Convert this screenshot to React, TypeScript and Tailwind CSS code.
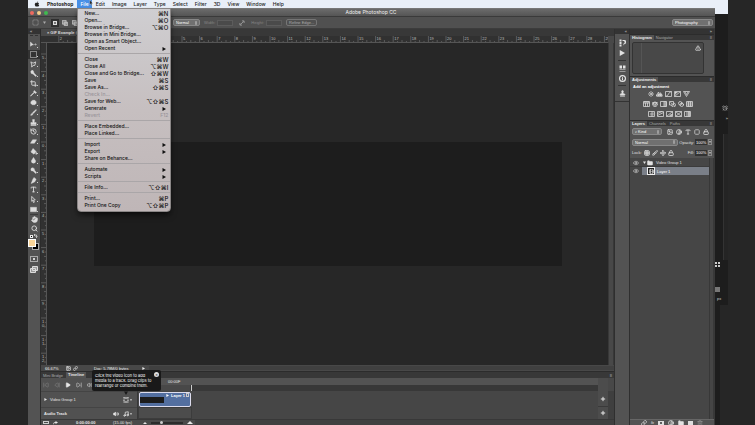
import React from 'react';
import {
  AlarmClock, Blend, Brush, Contrast, Crop, Droplet, Eraser, Eye, Film, Folder, Grid3x3,
  Hand, History, Image, Info, Link, Lock, Move, Music, PaintBucket, PenTool, Pipette, Play,
  Plus, Scale, Scissors, Search, SkipBack, SkipForward, SquareDashed, Stamp, StepBack, Sun, Trash2,
  TriangleAlert, Type, Volume2, Wand2,
} from 'lucide-react';
import { FaApple } from 'react-icons/fa';
import { clsx } from 'clsx';

type Item = { label: string; keys?: string; sub?: boolean; off?: boolean };

const menus = ['Edit', 'Image', 'Layer', 'Type', 'Select', 'Filter', '3D', 'View', 'Window', 'Help'];

const fileMenu: Item[][] = [
  [
    { label: 'New...', keys: '⌘N' },
    { label: 'Open...', keys: '⌘O' },
    { label: 'Browse in Bridge...', keys: '⌥⌘O' },
    { label: 'Browse in Mini Bridge...' },
    { label: 'Open as Smart Object...' },
    { label: 'Open Recent', sub: true },
  ],
  [
    { label: 'Close', keys: '⌘W' },
    { label: 'Close All', keys: '⌥⌘W' },
    { label: 'Close and Go to Bridge...', keys: '⇧⌘W' },
    { label: 'Save', keys: '⌘S' },
    { label: 'Save As...', keys: '⇧⌘S' },
    { label: 'Check In...', off: true },
    { label: 'Save for Web...', keys: '⌥⇧⌘S' },
    { label: 'Generate', sub: true },
    { label: 'Revert', keys: 'F12', off: true },
  ],
  [{ label: 'Place Embedded...' }, { label: 'Place Linked...' }],
  [
    { label: 'Import', sub: true },
    { label: 'Export', sub: true },
    { label: 'Share on Behance...' },
  ],
  [
    { label: 'Automate', sub: true },
    { label: 'Scripts', sub: true },
  ],
  [{ label: 'File Info...', keys: '⌥⇧⌘I' }],
  [
    { label: 'Print...', keys: '⌘P' },
    { label: 'Print One Copy', keys: '⌥⇧⌘P' },
  ],
];

function FileMenu() {
  return (
    <div className="absolute left-0 top-full z-30 w-[94px] rounded-b-sm border border-[#8a8686] bg-linear-to-b from-[#cfced1] via-[#c6bfc0] to-[#bfb6b7] pb-0.5 pt-px text-[#111] shadow-md shadow-black/50">
      {fileMenu.map((group, i) => (
        <div key={i} className={clsx(i > 0 && 'mt-px border-t border-[#aaa6a8] pt-0.5')}>
          {group.map((item) => (
            <button
              key={item.label}
              disabled={item.off}
              className={clsx('flex h-[7px] w-full items-center justify-between pl-1.5 pr-0.5 font-medium', item.off && 'text-[#99949a]')}
            >
              <span>{item.label}</span>
              {item.keys && <span className={clsx(!item.off && 'text-[6px]')}>{item.keys}</span>}
              {item.sub && <Triangle className="mr-0.5 size-1" />}
            </button>
          ))}
        </div>
      ))}
    </div>
  );
}

function Triangle({ className }: { className?: string }) {
  return (
    <svg viewBox="0 0 8 8" className={className} fill="currentColor">
      <path d="M1 0l7 4-7 4z" />
    </svg>
  );
}

function MenuBar() {
  return (
    <nav className="relative mr-[27px] flex h-2 items-center gap-px bg-[#e9eff8] pl-1.5 text-[5px] font-medium leading-[7px] text-[#222]">
      <button aria-label="Apple" className="mr-1.5"><FaApple className="size-[6px]" /></button>
      <button className="pr-[3px] font-bold">Photoshop</button>
      <div className="relative h-2">
        <button className="h-2 bg-[#478fe6] px-[3px] text-white">File</button>
        <FileMenu />
        <svg viewBox="0 0 6 10" className="absolute left-3 top-0 z-40 h-[6px] w-1" fill="#111" stroke="#fff" strokeWidth=".5">
          <path d="M1 0v8l2-2 1 3 1-.5-1-2.500h2z" />
        </svg>
      </div>
      {menus.map((name) => (
        <button key={name} className="px-[3px]">{name}</button>
      ))}
    </nav>
  );
}

function Dropdown({ label, value, className }: { label: string; value: string; className?: string }) {
  return (
    <div className={clsx('relative flex h-[7px] shrink-0 items-center rounded-xs border border-[#888] bg-[#707070]', className)}>
      <select aria-label={label} className="h-[5px] w-full appearance-none bg-transparent pl-0.5 text-[4px] leading-[5px] text-white">
        <option>{value}</option>
      </select>
      <svg viewBox="0 0 4 8" className="pointer-events-none absolute right-0.5 h-1 w-0.5" fill="#ddd">
        <path d="M0 3l2-3 2 3zM0 5l2 3 2-3z" />
      </svg>
    </div>
  );
}

function OptionsBar() {
  return (
    <div className="flex h-3 items-center border-b border-[#3c3c3c] bg-[#505050] px-0.5">
      <button aria-label="Marquee preset" className="flex w-[17px] items-center justify-center gap-1 text-[#aaa]">
        <SquareDashed className="size-[7px]" />
        <Triangle className="size-[3px] rotate-90" />
      </button>
      <div className="ml-1 flex w-[122px] items-center gap-0.5">
        <button aria-label="New selection" className="flex size-2 items-center justify-center border border-[#2e2e2e] bg-[#333]">
          <span className="size-1 border border-[#ddd] bg-[#777]" />
        </button>
        {['Add to selection', 'Subtract from selection', 'Intersect'].map((name) => (
          <button key={name} aria-label={name} className="flex size-2 items-center justify-center text-[#ccc]">
            <svg viewBox="0 0 8 8" className="size-[6px]" fill="#888" stroke="currentColor">
              <path d="M.5.5h5v5h-5zM3 3h4.500v4.500H3z" />
            </svg>
          </button>
        ))}
      </div>
      <Dropdown label="Style" value="Normal" className="w-[27px]" />
      <label className="ml-1 flex items-center gap-0.5 text-[#858585]">
        Width:
        <input className="h-[6px] w-4 border border-[#5c5c5c] bg-[#4a4a4a]" />
      </label>
      <button aria-label="Swap width and height" className="mx-1.5 text-[#999]">
        <svg viewBox="0 0 10 10" className="size-[6px]" fill="none" stroke="currentColor" strokeWidth="1.500">
          <path d="M2 8l6-6M5 1.500h3.500V5M1.500 5v3.500H5" />
        </svg>
      </button>
      <label className="flex items-center gap-0.5 text-[#858585]">
        Height:
        <input className="h-[6px] w-4 border border-[#5c5c5c] bg-[#4a4a4a]" />
      </label>
      <button className="ml-1 h-[7px] rounded-xs border border-[#757575] px-0.5 leading-[5px] text-[#aaa]">Refine Edge...</button>
      <Dropdown label="Workspace" value="Photography" className="ml-auto w-[41px]" />
    </div>
  );
}

const tools = [
  { name: 'Move', icon: Move },
  { name: 'Marquee', icon: SquareDashed },
  { name: 'Lasso', icon: Scissors },
  { name: 'Quick selection', icon: Wand2 },
  { name: 'Crop', icon: Crop },
  { name: 'Eyedropper', icon: Pipette },
  { name: 'Healing brush', icon: Blend },
  { name: 'Brush', icon: Brush },
  { name: 'Clone stamp', icon: Stamp },
  { name: 'History brush', icon: History },
  { name: 'Eraser', icon: Eraser },
  { name: 'Paint bucket', icon: PaintBucket },
  { name: 'Blur', icon: Droplet },
  { name: 'Dodge', icon: Search },
  { name: 'Pen', icon: PenTool },
  { name: 'Type', icon: Type },
  { name: 'Path selection', icon: Scissors },
  { name: 'Rectangle', icon: Image },
];

const solidTools: Record<string, string> = {
  Move: 'M1 2l7 7H5l-4 3zM10 8h5M12.500 5.500v5M10 8l1.500-1.500M15 8l-1.500-1.500',
  Lasso: 'M2 2l5 3 6-3-2 8H7l-3 4V9z',
  'Healing brush': 'M2 6l4-3h5l3 3v4l-3 3H5l-3-3z',
  'Quick selection': 'M2 5a3 3 0 016-2l1 4 6 6-2 2-6-6-4-1z',
  Eyedropper: 'M10 1l5 5-3 2-2-2-7 7-2 1 1-2 7-7-1-1z',
  Brush: 'M14 1l1 1-7 8-2-2zM5 9l2 2-2 3H1l2-2z',
  'Clone stamp': 'M6 1h4v4l-1 3h5v4H2V8h5L6 5zM2 13h12v2H2z',
  Eraser: 'M6 4h9l-5 8H1z',
  'Paint bucket': 'M7 1l7 7-5 6-7-5zM14 9l2 5h-3z',
  Blur: 'M8 1l5 8a5 5 0 11-10 0z',
  Dodge: 'M2 5a4 4 0 118 2l5 6-2 2-6-6a4 4 0 01-5-4z',
  Pen: 'M9 1l5 4-3 6-8 4 3-9zM3 14l5-6',
  Rectangle: 'M1 3h14v10H1z',
  'Path selection': 'M4 1l8 8H8l2 5-2 1-2-5-2 2z',
};

function ToolGlyph({ name, icon: Icon }: { name: string; icon: React.ElementType }) {
  const d = solidTools[name];
  if (name === 'Marquee') {
    return (
      <svg viewBox="0 0 14 14" className="size-[7px]" fill="none" stroke="currentColor" strokeWidth="2" strokeDasharray="2 2">
        <path d="M1 1h12v12H1z" />
      </svg>
    );
  }
  if (!d) return <Icon className="size-[7px]" strokeWidth={3} />;
  const hollow = name === 'Lasso' || name === 'Path selection';
  return (
    <svg viewBox="0 0 16 16" className="size-[7px]" fill={hollow ? 'none' : 'currentColor'} stroke="currentColor" strokeWidth={hollow ? 2 : 1}>
      <path d={d} />
    </svg>
  );
}

function ToolBar() {
  return (
    <aside className="w-[13px] shrink-0 border-r border-[#2c2c2c] bg-[#535353] text-[#dcdcdc]">
      <div className="h-[5px] bg-[#333] pl-0.5 leading-[5px]">«</div>
      <div className="mx-0.5 mt-px border-t border-dashed border-[#333]" />
      <div className="mt-1 grid h-[174px] auto-rows-fr">
        {tools.map((t) => (
          <button
            key={t.name}
            aria-label={t.name}
            className={clsx('relative flex items-center justify-center pr-px', t.name === 'Marquee' && 'bg-[#333]')}
          >
            <ToolGlyph {...t} />
            <span className="absolute bottom-0.5 right-0.5 size-px bg-[#ccc]" />
          </button>
        ))}
      </div>
      <div className="mx-0.5 border-t border-[#3b3b3b]" />
      <button aria-label="Hand" className="flex h-[9px] w-full items-center justify-center"><Hand className="size-[7px] fill-current" /></button>
      <button aria-label="Zoom" className="flex h-[9px] w-full items-center justify-center"><Search className="size-[7px]" strokeWidth={3} /></button>
      <div className="flex h-[6px] items-center justify-between px-0.5">
        <button aria-label="Default colors" className="size-[3px] border border-[#eee] bg-black" />
        <button aria-label="Swap colors">
          <svg viewBox="0 0 8 8" className="size-1" fill="none" stroke="currentColor" strokeWidth="1.500">
            <path d="M0 2h5v5M3 5l2 2 2-2M2 0L0 2l2 2" />
          </svg>
        </button>
      </div>
      <div className="relative h-3">
        <button aria-label="Background color" className="absolute left-1 top-1 size-[7px] border border-[#aaa] bg-black" />
        <button aria-label="Foreground color" className="absolute left-0 top-0 size-[8px] border border-white bg-[#fad599]" />
      </div>
      <button aria-label="Quick mask" className="mt-1 flex h-2 w-full items-center justify-center">
        <span className="flex h-[6px] w-2 items-center justify-center border border-[#aaa]"><span className="size-0.5 rounded-full bg-white" /></span>
      </button>
      <button aria-label="Screen mode" className="mt-px flex h-[10px] w-full items-center justify-center">
        <svg viewBox="0 0 16 14" className="h-[7px] w-2" fill="#999" stroke="currentColor" strokeWidth="2">
          <path d="M5 1h10v8H5zM1 5h10v8H1z" />
        </svg>
      </button>
    </aside>
  );
}

const STEP = 17.6;

function HorizontalRuler() {
  const marks = Array.from({ length: 32 }, (_, i) => i - 2);
  return (
    <svg className="block h-[7px] w-full bg-[#313131]" fontSize="4" fill="#bbb">
      {marks.map((n) => {
        const x = 53 + n * STEP;
        return (
          <g key={n}>
            <path d={`M${x} 0v7M${x + 4.4} 5v2M${x + 8.8} 4v3M${x + 13.2} 5v2`} stroke="#777" strokeWidth=".6" />
            <text x={x + 1} y="4">{Math.abs(n)}</text>
          </g>
        );
      })}
      <path d="M0 6.500h2000" stroke="#555" />
    </svg>
  );
}

function VerticalRuler() {
  const marks = Array.from({ length: 18 }, (_, i) => i - 5);
  return (
    <svg className="block h-full w-[6px] shrink-0 bg-[#313131]" fontSize="4" fill="#bbb">
      {marks.map((n) => {
        const y = 99 + n * STEP;
        return (
          <g key={n}>
            <path d={`M0 ${y}h6M4 ${y + 4.4}h2M3 ${y + 8.8}h3M4 ${y + 13.2}h2`} stroke="#777" strokeWidth=".6" />
            {String(Math.abs(n)).split('').map((c, i) => (
              <text key={i} x="1" y={y + 5 + i * 4}>{c}</text>
            ))}
          </g>
        );
      })}
      <path d="M5.500 0v2000" stroke="#555" />
    </svg>
  );
}

function Document() {
  return (
    <section className="flex min-h-0 flex-1 flex-col">
      <div className="flex h-[7px] shrink-0 bg-[#383838]">
        <div className="flex w-24 items-center gap-px bg-[#4a4a4a] pl-1.5 font-bold text-[#ddd]">
          <button aria-label="Close document">×</button>
          <span className="whitespace-nowrap">GIF Example @ 66.7%</span>
        </div>
      </div>
      <div className="flex min-h-0 flex-1">
        <div className="flex min-w-0 flex-1 flex-col">
          <HorizontalRuler />
          <div className="flex min-h-0 flex-1">
            <VerticalRuler />
            <div className="min-w-0 flex-1 overflow-hidden bg-[#272727]">
              <div className="ml-[47px] mr-[46px] mt-[99px] h-[124px] bg-[#1d1d1d]" />
            </div>
          </div>
        </div>
        <div className="mt-[7px] w-[6px] border-x border-[#383838] bg-[#484848]" />
      </div>
      <div className="flex h-[6px] shrink-0 items-center bg-[#484848] pl-1 text-[#eee]">
        <span className="w-[21px]">66.67%</span>
        <span className="flex w-7 gap-0.5">
          <Image className="size-[5px]" strokeWidth={3} />
          <Link className="size-[5px]" strokeWidth={3} />
        </span>
        <span className="w-12">Doc: 5.78M/0 bytes</span>
        <Triangle className="size-[3px]" />
        <span className="ml-1 h-1 flex-1 bg-[#404040]" />
      </div>
    </section>
  );
}

function Tooltip() {
  return (
    <div role="tooltip" className="absolute -top-2 left-[51px] z-20 w-[69px] rounded-xs bg-[#191919] px-[3px] py-[3px] font-[Inter] text-[4px] leading-[5px] text-white">
      Click the video icon to add
      <br />
      media to a track. Drag clips to
      <br />
      rearrange or combine them.
      <button aria-label="Close tip" className="absolute right-0.5 top-0.5 flex size-[5px] items-center justify-center rounded-full bg-[#ddd] text-black">×</button>
      <Triangle className="absolute left-8 top-full size-1 rotate-90 text-[#191919]" />
    </div>
  );
}

function FilmStrip() {
  return (
    <svg viewBox="0 0 12 12" className="size-[6px]" fill="none" stroke="currentColor" strokeWidth="2">
      <path d="M2 0v12M10 0v12" strokeDasharray="2 1" />
      <path d="M3 2h6M3 10h6" />
    </svg>
  );
}

function Timeline() {
  return (
    <section className="flex h-[54px] shrink-0 flex-col border-t border-[#2c2c2c] text-[#e6e6e6]">
      <div className="flex h-[6px] shrink-0 items-center bg-[#383838]">
        <button className="pl-0.5 pr-[3px] text-[#aaa]">Mini Bridge</button>
        <button className="h-[6px] bg-[#535353] px-0.5 font-bold leading-[6px]">Timeline</button>
        <button aria-label="Timeline menu" className="ml-auto pr-0.5">≡</button>
      </div>
      <div className="relative flex min-h-0 flex-1">
        <div className="w-24 shrink-0 bg-[#515151]">
          <div className="flex h-[13px] items-center gap-[5px] pl-0.5">
            <button aria-label="First frame" className="text-[#888]"><SkipBack className="size-[6px]" /></button>
            <button aria-label="Previous frame" className="text-[#888]"><StepBack className="size-[6px]" /></button>
            <button aria-label="Play"><Play className="size-[6px] fill-current" /></button>
            <button aria-label="Next frame"><SkipForward className="size-[6px]" /></button>
            <button aria-label="Mute"><Volume2 className="size-[6px]" /></button>
          </div>
          <div className="flex h-4 items-center border-t border-[#444] pl-[3px] pr-[5px]">
            <Triangle className="mr-[3px] size-[3px]" />
            <span className="flex-1">Video Group 1</span>
            <button aria-label="Add media" className="flex items-center gap-px"><FilmStrip /><Triangle className="size-0.5 rotate-90" /></button>
          </div>
          <div className="flex h-3 items-center border-t border-[#444] pl-[3px] pr-[5px]">
            <span className="flex-1 font-bold">Audio Track</span>
            <Volume2 className="mr-1 size-[6px] fill-current" />
            <button aria-label="Add audio" className="flex items-center gap-px"><Music className="size-[6px]" strokeWidth={3} /><Triangle className="size-0.5 rotate-90" /></button>
          </div>
        </div>
        <div className="min-w-0 flex-1 border-l border-[#383838] bg-[#464646]">
          <div className="h-[7px] bg-[#535353] pl-[30px] leading-[7px]">00:00F</div>
          <div className="flex h-[6px] bg-[#383838]">
            <div className="mr-px w-[52px] bg-[#484848]" />
            <div className="w-px bg-[#ccc]" />
          </div>
          <div className="h-4 pl-px pt-px">
            <div className="flex h-[15px] w-[52px] items-start rounded-xs border border-[#dde] bg-[#536fa0]">
              <div className="mt-1 h-[6px] w-6 bg-[#1c1c1c]" />
              <span className="flex items-center gap-0.5 whitespace-nowrap pl-0.5 font-bold leading-[5px] text-white">
                <Triangle className="size-[3px]" />
                Layer 1
              </span>
              <span className="ml-px h-1 w-[3px] border border-[#ccc]" />
            </div>
          </div>
          <div className="h-3 w-[54px] border border-[#3c3c3c] bg-[#4c4c4c]" />
        </div>
        <div className="flex w-[10px] shrink-0 flex-col bg-[#4c4c4c] pt-[13px]">
          <button aria-label="Add to video track" className="flex h-4 items-center justify-center border-b border-[#3a3a3a]"><Plus className="size-[6px]" strokeWidth={4} /></button>
          <button aria-label="Add to audio track" className="flex h-[11px] items-center justify-center"><Plus className="size-[6px]" strokeWidth={4} /></button>
        </div>
        <div className="mt-[13px] w-[6px] bg-[#3f3f3f]" />
        <Tooltip />
      </div>
      <div className="flex h-[6px] shrink-0 items-center border-t border-[#383838] bg-[#4a4a4a] pl-0.5">
        <span className="h-[3px] w-[6px] border border-[#ccc]" />
        <svg viewBox="0 0 10 8" className="ml-1 h-1 w-[5px]" fill="currentColor">
          <path d="M0 8c0-4 2-6 5-6V0l5 3-5 3V4C3 4 1 5 0 8z" />
        </svg>
        <span className="ml-[18px] w-[37px] font-bold">0:00:00:00</span>
        <span className="w-[26px]">(15.00 fps)</span>
        <svg viewBox="0 0 8 4" className="mx-1 h-0.5 w-1" fill="currentColor"><path d="M0 4l4-4 4 4z" /></svg>
        <input
          type="range"
          aria-label="Timeline zoom"
          defaultValue={30}
          className="h-0.5 w-8 appearance-none bg-[#2c2c2c] [&::-webkit-slider-thumb]:size-[3px] [&::-webkit-slider-thumb]:appearance-none [&::-webkit-slider-thumb]:rounded-full [&::-webkit-slider-thumb]:bg-[#ccc]"
        />
        <svg viewBox="0 0 8 4" className="ml-1 h-[3px] w-[6px]" fill="currentColor"><path d="M0 4l4-4 4 4z" /></svg>
        <span className="ml-0.5 h-full flex-1 bg-[#404040]" />
      </div>
    </section>
  );
}

function PanelTabs({ tabs }: { tabs: string[] }) {
  return (
    <div className="flex h-[6px] shrink-0 items-center border-t border-[#2c2c2c] bg-[#383838] text-[#aaa]">
      {tabs.map((tab, i) => (
        <button key={tab} className={clsx('h-full px-0.5 leading-[5px]', i === 0 && 'bg-[#535353] font-bold text-[#eee]')}>{tab}</button>
      ))}
      <button aria-label={`${tabs[0]} menu`} className="ml-auto pr-0.5 text-[#ddd]">≡</button>
    </div>
  );
}

function PanelIcon({ label, icon: Icon }: { label: string; icon: React.ElementType }) {
  return (
    <button aria-label={label} className="text-[#e2e2e2]">
      <Icon className="size-[6px]" strokeWidth={3} />
    </button>
  );
}

function AdjustGlyph({ d, label }: { d: string; label: string }) {
  return (
    <button aria-label={label}>
      <svg viewBox="0 0 14 12" className="h-[6px] w-[7px]" fill="none" stroke="#ddd" strokeWidth="1.500">
        <path d={d} />
      </svg>
    </button>
  );
}

function Adjustments() {
  return (
    <div className="h-[38px] bg-[#535353]">
      <p className="pl-[3px] pt-0.5 font-bold text-white">Add an adjustment</p>
      <div className="mt-px flex h-[7px] items-center justify-center gap-0.5 pr-1.5">
        <PanelIcon label="Brightness" icon={Sun} />
        <AdjustGlyph label="Levels" d="M1 10V8h1V6h2V3h2v4h2V4h2v3h2v3zM1 10h12M3 8h8M5 6v4M9 6v4" />
        <AdjustGlyph label="Curves" d="M1 1h12v10H1zM1 11c7-1 5-9 12-10" />
        <AdjustGlyph label="Exposure" d="M1 1h12v10H1zM1 11L13 1M2 3h5M3 2v5M4 2v3" />
        <AdjustGlyph label="Vibrance" d="M1 1h12L7 11zM4 2l3 5 3-5" />
      </div>
      <div className="mt-[3px] flex h-[7px] items-center justify-center gap-0.5 pr-2">
        <AdjustGlyph label="Hue" d="M1 1h12v10H1zM1 4h12M5 4v7M9 4v7M2 2h10" />
        <PanelIcon label="Color balance" icon={Scale} />
        <AdjustGlyph label="Black and white" d="M1 1h12v10H1zM8 1v10M10 1v10M12 1v10" />
        <AdjustGlyph label="Photo filter" d="M1 1h8v7H1zM9 4a4 4 0 11-4 4M3 3l8 6" />
        <PanelIcon label="Channel mixer" icon={Blend} />
        <AdjustGlyph label="Color lookup" d="M1 1h12v10H1zM1 4h12M1 8h12M5 1v10M9 1v10" />
      </div>
      <div className="mt-[3px] flex h-[7px] items-center justify-center gap-0.5 pr-1.5">
        <AdjustGlyph label="Invert" d="M1 1h12v10H1zM8 1v10M6 4v5M10 3v6" />
        <AdjustGlyph label="Posterize" d="M1 1h12v10H1zM1 9l12-6M1 5l9-4" />
        <AdjustGlyph label="Threshold" d="M1 1h12v10H1zM1 11L13 1M7 9h5M9 7h4" />
        <AdjustGlyph label="Selective color" d="M1 1h12v10H1zM1 1l12 10M13 1L1 11" />
        <AdjustGlyph label="Gradient map" d="M1 1h12v10H1zM9 1v10M11 1v10M6 1v10" />
      </div>
    </div>
  );
}

function Percent({ label }: { label: string }) {
  return (
    <label className="flex items-center gap-px">
      {label}
      <input defaultValue="100%" className="h-[6px] w-3 bg-[#333] pl-px text-[4px] leading-[5px] text-white" />
      <span className="flex h-[6px] w-1 items-center justify-center border border-[#888]"><Triangle className="size-0.5 rotate-90" /></span>
    </label>
  );
}

function LayersPanel() {
  return (
    <div className="flex min-h-0 flex-1 flex-col bg-[#464646] text-[#e2e2e2]">
      <div className="bg-[#535353]">
        <div className="flex h-[11px] items-center gap-[3px] px-0.5">
          <Dropdown label="Filter kind" value="⌕ Kind" className="mr-0.5 w-[30px]" />
          <PanelIcon label="Pixel layers" icon={Image} />
          <PanelIcon label="Adjustment layers" icon={Contrast} />
          <PanelIcon label="Type layers" icon={Type} />
          <PanelIcon label="Shape layers" icon={SquareDashed} />
          <PanelIcon label="Smart objects" icon={Lock} />
          <span className="ml-auto mr-px h-[6px] w-0.5 bg-[#333]" />
        </div>
        <div className="flex h-[10px] items-center justify-between px-0.5">
          <Dropdown label="Blend mode" value="Normal" className="w-[46px]" />
          <Percent label="Opacity:" />
        </div>
        <div className="flex h-[11px] items-center gap-0.5 px-0.5">
          <span>Lock:</span>
          <PanelIcon label="Lock transparency" icon={Grid3x3} />
          <PanelIcon label="Lock pixels" icon={Brush} />
          <PanelIcon label="Lock position" icon={Move} />
          <PanelIcon label="Lock all" icon={Lock} />
          <div className="ml-auto"><Percent label="Fill:" /></div>
        </div>
      </div>
      <div className="flex min-h-0 flex-1">
        <ul className="flex-1 pt-px">
          <li className="flex h-2 items-center border-b border-[#3b3b3b]">
            <button aria-label="Hide group" className="flex w-3 justify-center"><Eye className="size-[6px]" /></button>
            <Triangle className="mx-px size-[3px] rotate-90" />
            <Folder className="size-[6px] fill-current" />
            <span className="pl-[3px]">Video Group 1</span>
          </li>
          <li className="flex h-2 items-center">
            <button aria-label="Hide layer" className="flex w-3 justify-center"><Eye className="size-[6px]" /></button>
            <div className="flex h-full flex-1 items-center bg-[#7a7f88] pl-[5px] text-white">
              <span className="flex size-2 items-center justify-center border border-[#eee] bg-[#222]"><Film className="size-[5px]" /></span>
              <span className="pl-0.5">Layer 1</span>
            </div>
          </li>
        </ul>
        <div className="w-[5px] border-x border-[#383838] bg-[#454545]" />
      </div>
      <div className="flex h-[6px] shrink-0 items-center justify-center gap-1 border-t border-[#666] bg-[#535353]">
        <PanelIcon label="Link layers" icon={Link} />
        <button aria-label="Layer style" className="italic">fx</button>
        <button aria-label="Add mask" className="flex h-1 w-[6px] items-center justify-center bg-[#ddd]"><span className="size-0.5 rounded-full bg-[#333]" /></button>
        <PanelIcon label="New adjustment" icon={Contrast} />
        <button aria-label="New group"><Folder className="size-[6px] fill-current" /></button>
        <button aria-label="New layer" className="h-1 w-[5px] bg-[#ddd]" />
        <button aria-label="Delete layer" className="text-[#999]"><Trash2 className="size-[6px]" /></button>
      </div>
    </div>
  );
}

function IconDock() {
  return (
    <aside className="w-4 shrink-0 border-x border-[#2f2f2f] bg-[#535353]">
      <div className="h-[5px] bg-[#333] pr-0.5 text-right text-[#ccc]">«</div>
      <div className="flex flex-col items-center text-[#e2e2e2]">
        <button aria-label="History" className="mt-[5px] h-2">
          <svg viewBox="0 0 14 16" className="h-2 w-[7px]" fill="currentColor">
            <path d="M1 1h4v4H1zM1 6h4v4H1zM1 11h4v4H1zM7 2h3a4 4 0 011 8l-2 3V9c3 0 3-5 0-5H7z" />
          </svg>
        </button>
        <button aria-label="Actions" className="mt-[3px]"><Triangle className="size-[6px]" /></button>
        <div className="mt-1 w-2 border-t border-[#333]" />
        <button aria-label="Properties" className="mt-[3px] h-2">
          <svg viewBox="0 0 14 14" className="size-[7px]" fill="currentColor">
            <path d="M1 1h5v6H1zM8 1h5v6H8zM1 9h12v1H1zM1 12h12v1H1z" />
          </svg>
        </button>
        <button aria-label="Info" className="mt-[3px]">
          <Info className="size-[7px] fill-[#444] stroke-[#e8e8e8]" strokeWidth={4} />
        </button>
        <div className="mt-[3px] w-2 border-t border-[#333]" />
        <button aria-label="Clone source" className="mt-1">
          <Stamp className="size-[7px] fill-current" />
        </button>
        <div className="mt-1 w-full border-t border-[#333]" />
      </div>
    </aside>
  );
}

function Panels() {
  return (
    <aside className="flex w-[85px] shrink-0 flex-col border-r border-[#383838]">
      <div className="h-[5px] shrink-0 bg-[#333] pr-0.5 text-right text-[#ccc]">»</div>
      <PanelTabs tabs={['Histogram', 'Navigator']} />
      <div className="flex h-9 shrink-0 items-start bg-[#535353] pb-px pl-0.5 pr-[10px] pt-0.5">
        <div className="flex h-8 flex-1 items-start justify-between rounded-xs border border-[#333] bg-[#484848] pl-2">
          <span className="h-full w-px bg-[#555]" />
          <TriangleAlert className="m-0.5 size-[6px] text-[#ddd]" strokeWidth={3} />
        </div>
      </div>
      <PanelTabs tabs={['Adjustments']} />
      <Adjustments />
      <PanelTabs tabs={['Layers', 'Channels', 'Paths']} />
      <LayersPanel />
    </aside>
  );
}

// sliver of the second window that shows behind this one
function BackWindow() {
  return (
    <div className="flex w-[13px] shrink-0 flex-col items-end bg-[#1d1d1d] text-[#ccc]">
      <div className="h-[6px] w-full bg-[#e9eff8]" />
      <AlarmClock className="mt-[91px] size-[6px]" />
      <span className="mt-[5px] leading-[6px]">»</span>
      <div className="mt-3 h-[126px] w-[5px] border-l border-[#333] bg-[#242424]" />
      <svg viewBox="0 0 10 10" className="mr-2 mt-0.5 size-[5px]" fill="currentColor">
        <path d="M0 0h4v4H0zM6 0h4v4H6zM0 6h4v4H0zM6 6h4v4H6z" />
      </svg>
      <div className="mr-2 mt-5 size-[5px] bg-[#777]" />
      <div className="mt-1 w-full whitespace-nowrap pl-0.5">px</div>
      <div className="mt-1 w-2 flex-1 bg-[#262626]" />
    </div>
  );
}

export default function App() {
  return (
    <div className="flex h-screen flex-col overflow-hidden bg-[#262626] pl-7 font-['Liberation_Sans',sans-serif] text-[4px] leading-[5px] text-[#ddd]">
      <div className="font-[Inter,'DejaVu_Sans',sans-serif]">
        <MenuBar />
      </div>
      <div className="flex min-h-0 flex-1 pr-[27px]">
        <div className="flex min-w-0 flex-1 flex-col border-t border-[#777]">
          <header className="flex h-2 shrink-0 items-center gap-[3px] border-b border-[#3a3a3a] bg-linear-to-b from-[#6b6b6b] to-[#555] pl-0.5">
            <button aria-label="Close" className="size-1 rounded-full bg-[#ee6a5f]" />
            <button aria-label="Minimize" className="size-1 rounded-full bg-[#f5cf8a]" />
            <button aria-label="Full screen" className="size-1 rounded-full bg-[#3fb950]" />
            <h1 className="flex-1 pr-6 text-center font-[Inter] text-[5px] leading-[7px] text-[#eee]">Adobe Photoshop CC</h1>
          </header>
          <OptionsBar />
          <div className="flex min-h-0 flex-1">
            <ToolBar />
            <main className="flex min-w-0 flex-1 flex-col bg-[#484848]">
              <Document />
              <Timeline />
            </main>
            <IconDock />
            <Panels />
          </div>
        </div>
        <BackWindow />
      </div>
    </div>
  );
}
